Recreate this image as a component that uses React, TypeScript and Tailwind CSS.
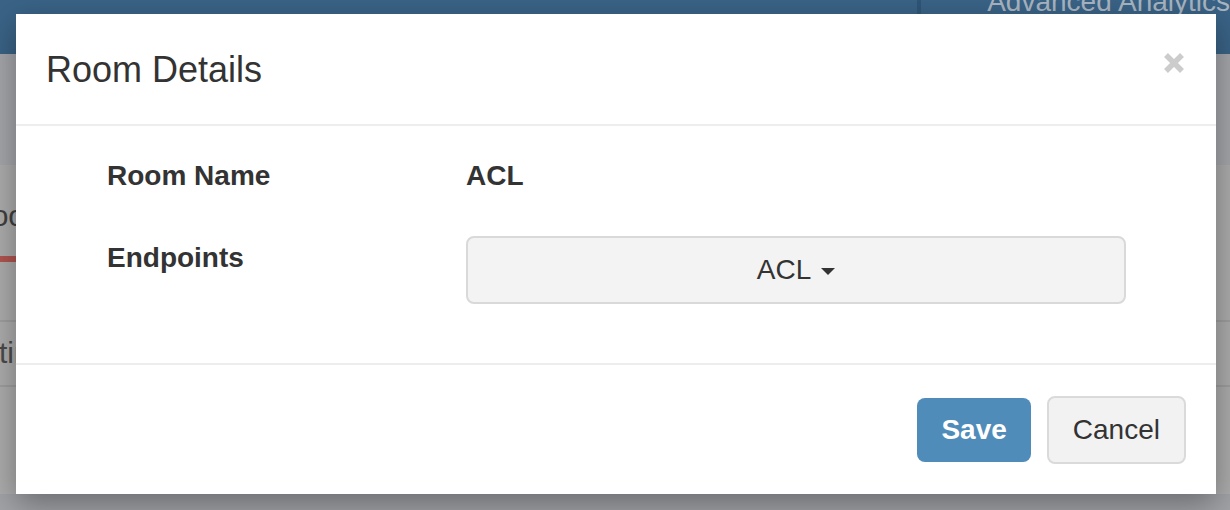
import React from 'react';

const CloseIcon = () => (
  <svg width="22" height="22" viewBox="0 0 22 22" className="text-[#cccccc]">
    <path d="M3 3L19 19M19 3L3 19" stroke="currentColor" strokeWidth="5.5" fill="none" />
  </svg>
);

const RoomDetailsModal = () => {
  return (
    <div className="absolute left-[16px] top-[14px] w-[1200px] bg-white text-[#333] shadow-[0_10px_30px_rgba(0,0,0,0.35)]">
      <div className="flex h-[112px] items-start justify-between border-b-2 border-[#ededed] pl-[30px] pr-[31px] pt-[30px]">
        <h4 className="text-[36px] leading-[51px]">Room Details</h4>
        <button className="mt-[8px]">
          <CloseIcon />
        </button>
      </div>

      <div className="pl-[91px] pt-[30px] pb-[59px]">
        <div className="flex h-[40px] text-[28px] font-bold leading-[40px]">
          <div className="w-[359px]">Room Name</div>
          <div>ACL</div>
        </div>
        <div className="mt-[40px] flex">
          <div className="w-[359px] pt-[2px] text-[28px] font-bold leading-[40px]">Endpoints</div>
          <button className="flex h-[68px] w-[660px] items-center justify-center rounded-[8px] border-2 border-[#d9d9d9] bg-[#f3f3f3] text-[28px] leading-[40px]">
            ACL
            <span className="ml-[10px] mt-[2px] h-0 w-0 border-x-[7px] border-t-[7px] border-b-0 border-x-transparent border-t-[#333]" />
          </button>
        </div>
      </div>

      <div className="flex items-center justify-end gap-[16px] border-t-2 border-[#ededed] pr-[30px] pt-[31px] pb-[30px]">
        <button className="h-[64px] rounded-[8px] bg-[#4f8cba] px-[24px] text-[28px] font-bold leading-[40px] text-white">
          Save
        </button>
        <button className="h-[68px] rounded-[8px] border-2 border-[#dadada] bg-[#f2f2f2] px-[24px] text-[28px] leading-[40px]">
          Cancel
        </button>
      </div>
    </div>
  );
};

export default function App() {
  return (
    <div className="relative h-[510px] w-[1230px] overflow-hidden font-['Liberation_Sans',Arial,sans-serif]">
      {/* dimmed page behind the modal */}
      <div className="flex h-full flex-col">
        <div className="flex h-[54px] overflow-hidden bg-[#3a6386]">
          <div className="w-[923px]" />
          <div className="w-[4px] bg-[#2f5677]" />
          <div className="-mt-[18px] flex-1 whitespace-nowrap pl-[66px] text-[28px] leading-[40px] text-[#a9b5c1]">
            Advanced Analytics
          </div>
        </div>
        <div className="h-[111px] bg-[#a5a6aa]" />
        <div className="flex-1 overflow-hidden bg-[#acacac] pt-[33px]">
          <div className="-ml-[30px] whitespace-nowrap text-[30px] leading-[36px] text-[#3f3f3f]">Rooms</div>
          <div className="mt-[22px] h-[6px] w-[200px] bg-[#b15450]" />
          <div className="mt-[58px] h-[2px] bg-[#9e9e9e]" />
          <div className="-ml-[46px] mt-[13px] whitespace-nowrap text-[30px] leading-[36px] text-[#4a4a4a]">Settings</div>
          <div className="mt-[14px] h-[2px] bg-[#9e9e9e]" />
        </div>
        <div className="h-[16px] bg-[#a1a3a7]" />
      </div>

      <RoomDetailsModal />
    </div>
  );
}
